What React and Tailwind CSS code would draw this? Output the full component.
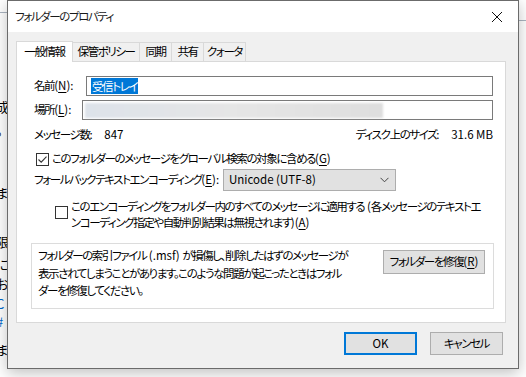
import React from 'react';

const font = {
  fontFamily: '"Noto Sans CJK JP", "Noto Sans", sans-serif',
  fontFeatureSettings: '"palt" 1',
};

// 背景のページ断片（ダイアログの後ろ）
const leftGlyphs = [
  { t: '成', y: 97, c: 'text-black' },
  { t: '。', y: 120, c: 'text-black' },
  { t: 'ま', y: 183, c: 'text-black' },
  { t: '限', y: 232, c: 'text-black' },
  { t: 'に', y: 254, c: 'text-black' },
  { t: 'お', y: 274, c: 'text-black' },
  { t: 'C', y: 294, c: 'text-[#0066cc]' },
  { t: '#', y: 312, c: 'text-[#0066cc]' },
  { t: 'ま', y: 340, c: 'text-black' },
];

// アクセスキー表記 (X)
function Key({ k, colon }) {
  return (
    <span className="tracking-normal">
      (<span className="underline underline-offset-2">{k}</span>){colon && ':'}
    </span>
  );
}

function Tab({ label, active, w }) {
  return active ? (
    <div className={`${w} h-[21px] -mb-px bg-white border border-b-0 border-[#d9d9d9] flex items-center justify-center z-10`}>
      {label}
    </div>
  ) : (
    <div className={`${w} h-[19px] bg-[#f0f0f0] border border-l-0 border-b-0 border-[#d9d9d9] flex items-center justify-center`}>
      {label}
    </div>
  );
}

function Checkbox({ checked }) {
  return (
    <span className="w-[13px] h-[13px] border border-[#333] bg-white flex items-center justify-center shrink-0">
      {checked && (
        <svg width="11" height="11" viewBox="0 0 11 11">
          <path d="M1.5 5.5 L4.2 8.2 L9.5 2.6" fill="none" stroke="#333" strokeWidth="1.1" />
        </svg>
      )}
    </span>
  );
}

export default function App() {
  return (
    <div className="relative w-[526px] h-[377px] bg-white overflow-hidden text-[11.5px] tracking-[-1.4px] text-black whitespace-nowrap" style={font}>
      {/* 背景 */}
      <div className="absolute left-0 top-[12px] w-[7px] h-px bg-[#aab4c0]" />
      <div className="absolute left-[519px] top-[20px] w-[7px] h-px bg-[#aab4c0]" />
      {leftGlyphs.map((g) => (
        <div key={g.y} className={`absolute left-[-4px] text-[13px] ${g.c}`} style={{ top: g.y }}>
          {g.t}
        </div>
      ))}

      {/* ダイアログ */}
      <div className="absolute left-[7px] top-0 w-[512px] h-[369px] bg-[#f0f0f0] border border-[#6b6b6b] shadow-[0_4px_14px_rgba(0,0,0,0.25)] flex flex-col">
        <div className="h-[31px] bg-white flex items-center justify-between pl-[7px] pr-[15px] shrink-0">
          <span className="text-[#1a1a1a]">フォルダーのプロパティ</span>
          <svg width="12" height="12" viewBox="0 0 12 12">
            <path d="M1 1 L11 11 M11 1 L1 11" stroke="#111" strokeWidth="1" />
          </svg>
        </div>

        <div className="pl-[8px] pr-[12px] pt-[8px]">
          <div className="flex items-end h-[21px]">
            <Tab label="一般情報" active w="w-[57px]" />
            <Tab label="保管ポリシー" w="w-[67px]" />
            <Tab label="同期" w="w-[32px]" />
            <Tab label="共有" w="w-[32px]" />
            <Tab label="クォータ" w="w-[42px]" />
          </div>

          <div className="h-[262px] bg-white border border-[#d9d9d9] pl-[17px] pr-[12px] pt-[14px]">
            <div className="flex items-center h-[20px]">
              <span className="w-[52px] shrink-0">名前<Key k="N" colon /></span>
              <div className="flex-1 h-[20px] border border-[#7a7a7a] flex items-center pl-[4px]">
                <span className="bg-[#0078d7] text-white leading-[16px] px-px">受信トレイ</span>
              </div>
            </div>
            <div className="flex items-center h-[20px] mt-[4px]">
              <span className="w-[48px] shrink-0">場所<Key k="L" colon /></span>
              <div className="flex-1 h-[20px] border border-[#7a7a7a] flex items-center pl-[2px]">
                <div className="w-[298px] h-[15px] bg-gradient-to-r from-[#dde3ea] via-[#e6e6e6] to-[#dedede] blur-[1px]" />
              </div>
            </div>
            <div className="flex items-center justify-between h-[16px] mt-[7px]">
              <span>
                メッセージ数:<span className="ml-[13px] tracking-normal">847</span>
              </span>
              <span>
                ディスク上のサイズ:<span className="ml-[13px] tracking-normal">31.6 MB</span>
              </span>
            </div>
            <div className="flex items-center gap-[3px] mt-[8px] ml-[2px] h-[16px]">
              <Checkbox checked />
              <span>このフォルダーのメッセージをグローバル検索の対象に含める<Key k="G" /></span>
            </div>
            <div className="flex items-center mt-[2px] h-[22px]">
              <span className="w-[189px] shrink-0">フォールバックテキストエンコーディング<Key k="E" colon /></span>
              <div className="w-[173px] h-[22px] bg-[#e1e1e1] border border-[#adadad] flex items-center justify-between pl-[5px] pr-[6px]">
                <span className="tracking-normal">Unicode (UTF-8)</span>
                <svg width="9" height="6" viewBox="0 0 9 6">
                  <path d="M0.5 0.8 L4.5 4.8 L8.5 0.8" fill="none" stroke="#444" strokeWidth="1" />
                </svg>
              </div>
            </div>
            <div className="flex items-start gap-[3px] mt-[7px] ml-[21px]">
              <span className="mt-[8px]">
                <Checkbox />
              </span>
              <span className="leading-[16px]">
                このエンコーディングをフォルダー内のすべてのメッセージに適用する<span className="tracking-normal"> (</span>各メッセージのテキストエ
                <br />
                ンコーディング指定や自動判別結果は無視されます<span className="tracking-normal">)</span><Key k="A" />
              </span>
            </div>

            <div className="mt-[13px] -ml-[3px] -mr-[1px] h-[66px] border border-[#dcdcdc] flex items-start justify-between pl-[6px] pr-[8px] pt-[3px]">
              <p className="leading-[17.5px]">
                フォルダーの索引ファイル<span className="tracking-normal"> (.msf) </span>が損傷し、削除したはずのメッセージが
                <br />
                表示されてしまうことがあります。このような問題が起こったときはフォル
                <br />
                ダーを修復してください。
              </p>
              <button className="mt-[3px] w-[102px] h-[24px] bg-[#e1e1e1] border border-[#adadad] flex items-center justify-center">
                フォルダーを修復<Key k="R" />
              </button>
            </div>
          </div>
        </div>

        <div className="flex justify-end gap-[13px] pr-[15px] mt-[9px]">
          <button className="w-[73px] h-[23px] bg-[#e1e1e1] border-2 border-[#0078d7] flex items-center justify-center tracking-normal">
            OK
          </button>
          <button className="w-[73px] h-[23px] bg-[#e1e1e1] border border-[#adadad] flex items-center justify-center">
            キャンセル
          </button>
        </div>
      </div>
    </div>
  );
}
